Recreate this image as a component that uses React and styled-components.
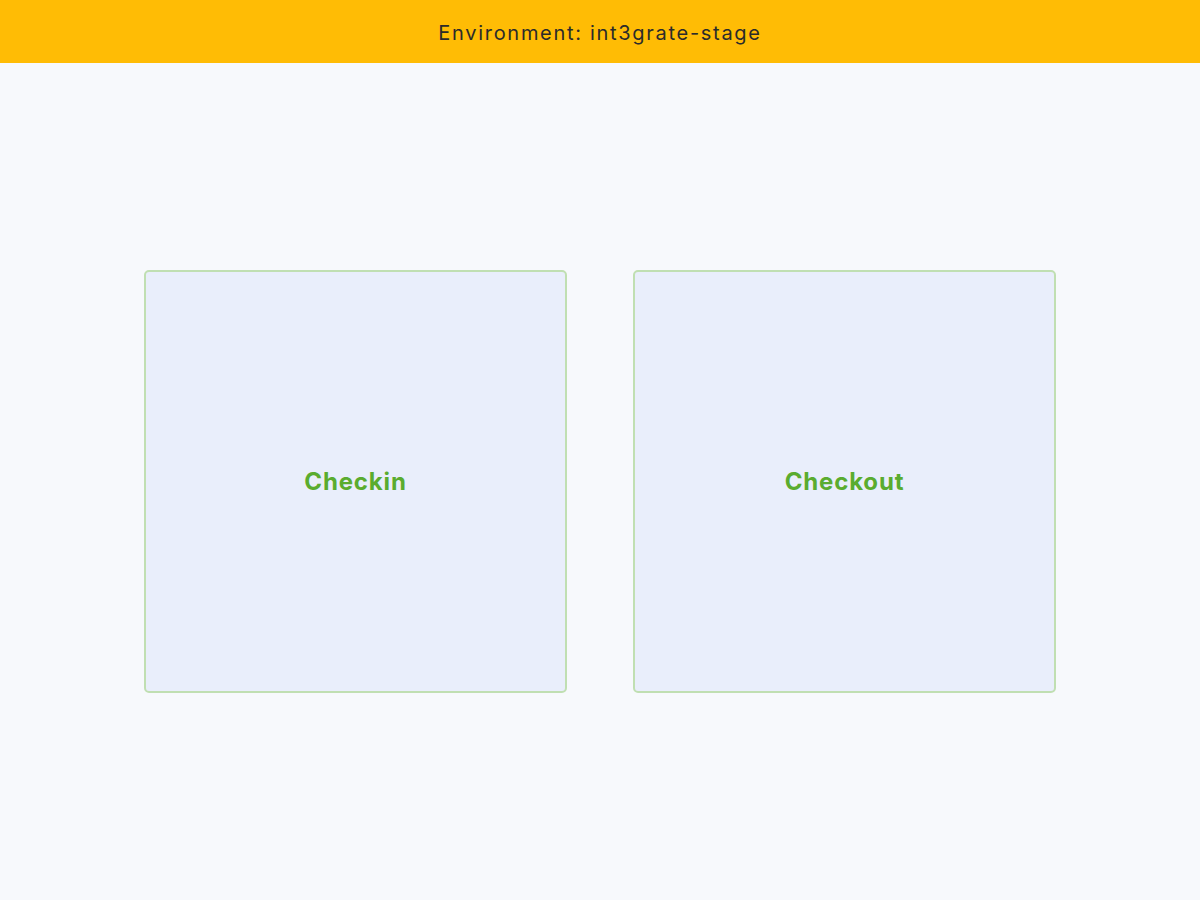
import styled, { createGlobalStyle } from "styled-components";

const GlobalStyle = createGlobalStyle`
  html, body {
    margin: 0;
    padding: 0;
    height: 100%;
  }
  body {
    font-family: Inter, "Liberation Sans", sans-serif;
    background-color: #f7f9fc;
  }
  #root {
    min-height: 100vh;
    display: flex;
    flex-direction: column;
  }
`;

const EnvBanner = styled.div`
  height: 63px;
  padding-top: 3px;
  box-sizing: border-box;
  background-color: #ffbc05;
  display: flex;
  align-items: center;
  justify-content: center;
  font-size: 20px;
  letter-spacing: 1.7px;
  color: #2b2b2b;
`;

const Main = styled.main`
  flex: 1;
  display: flex;
  align-items: center;
  justify-content: center;
  gap: 66px;
`;

const ActionCard = styled.button`
  width: 423px;
  height: 423px;
  box-sizing: border-box;
  background-color: #e9eefb;
  border: 2px solid #c0dfb2;
  border-radius: 5px;
  display: flex;
  align-items: center;
  justify-content: center;
  font-family: Inter, "Liberation Sans", sans-serif;
  font-size: 24px;
  font-weight: 700;
  letter-spacing: 0.85px;
  color: #5aac2f;
  cursor: pointer;
  padding: 0;
`;

export default function App() {
  return (
    <>
      <GlobalStyle />
      <EnvBanner>Environment: int3grate-stage</EnvBanner>
      <Main>
        <ActionCard>Checkin</ActionCard>
        <ActionCard>Checkout</ActionCard>
      </Main>
    </>
  );
}
